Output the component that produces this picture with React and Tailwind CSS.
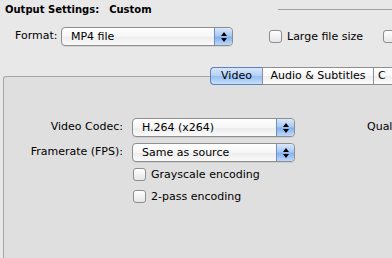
import React from "react";

// Aqua style pieces
const Stepper = () => (
  <div className="w-[18px] shrink-0 self-stretch rounded-r-[4px] border-l border-[#6c8fc4] bg-[linear-gradient(to_bottom,#d9e8fb_0%,#a9c9f3_45%,#86b2ee_55%,#bcd8fa_100%)] flex flex-col items-center justify-center gap-[2px]">
    <div className="w-0 h-0 border-l-[3px] border-r-[3px] border-b-[4px] border-l-transparent border-r-transparent border-b-black" />
    <div className="w-0 h-0 border-l-[3px] border-r-[3px] border-t-[4px] border-l-transparent border-r-transparent border-t-black" />
  </div>
);

const Popup = ({ value, width }) => (
  <div
    className={`${width} shrink-0 h-[19px] flex rounded-[4px] border border-[#8e8e8e] bg-[linear-gradient(to_bottom,#ffffff_0%,#f6f6f6_50%,#ececec_51%,#fafafa_100%)] shadow-[0_1px_0_rgba(0,0,0,0.08)] overflow-hidden`}>
    <div className="flex-1 pl-[9px] leading-[17px] whitespace-nowrap">{value}</div>
    <Stepper />
  </div>
);

const Checkbox = ({ label }) => (
  <label className="flex items-center gap-[5px] leading-[13px] whitespace-nowrap shrink-0">
    <span className="w-[13px] h-[13px] shrink-0 rounded-[3px] border border-[#8e8e8e] bg-[linear-gradient(to_bottom,#ffffff,#e6e6e6)]" />
    {label && <span>{label}</span>}
  </label>
);

const Tab = ({ label, selected, className = "" }) => (
  <div
    className={`h-[18px] shrink-0 flex items-center justify-center border-y whitespace-nowrap ${className} ${
      selected
        ? "bg-[linear-gradient(to_bottom,#d7e7fb_0%,#b2d0f6_50%,#93bef2_51%,#c6dffb_100%)] border-[#5f80b8]"
        : "bg-[linear-gradient(to_bottom,#ffffff_0%,#f7f7f7_50%,#eeeeee_51%,#fbfbfb_100%)] border-[#8e8e8e]"
    }`}>
    {label}
  </div>
);

export default function App() {
  return (
    <div className="w-[392px] h-[258px] overflow-hidden bg-[#e8e8e8] text-[11px] text-black font-['DejaVu_Sans',sans-serif] flex flex-col">
      {/* Header */}
      <div className="h-[19px] flex items-center pl-[5px] font-bold text-[10px] whitespace-nowrap">
        <span className="shrink-0">Output Settings:</span>
        <span className="ml-[10px] shrink-0">Custom</span>
        <div className="flex-1 ml-[126px] h-px bg-[#a0a0a0]" />
      </div>

      {/* Format row */}
      <div className="mt-[8px] h-[19px] flex items-center">
        <span className="ml-[15px] w-[46px] shrink-0">Format:</span>
        <Popup value="MP4 file" width="w-[172px]" />
        <div className="ml-[36px] shrink-0">
          <Checkbox label="Large file size" />
        </div>
        <div className="ml-[20px] shrink-0">
          <Checkbox />
        </div>
      </div>

      {/* Tabs */}
      <div className="mt-[21px] flex pl-[210px] -mb-[9px] relative z-10">
        <Tab label="Video" selected className="w-[52px] border-l rounded-l-[4px]" />
        <Tab label="Audio & Subtitles" className="w-[111px] border-l border-l-[#8e8e8e]" />
        <Tab label="C" className="w-[40px] border-l justify-start pl-[4px]" />
      </div>

      {/* Panel */}
      <div className="flex-1 ml-[3px] border-t border-l border-[#a6a6a6] rounded-tl-[3px] bg-[#dfdfdf] pt-[41px] whitespace-nowrap">
        <div className="flex items-center h-[19px]">
          <span className="w-[119px] shrink-0 text-right">Video Codec:</span>
          <div className="ml-[9px] shrink-0">
            <Popup value="H.264 (x264)" width="w-[163px]" />
          </div>
          <span className="ml-[72px] shrink-0">Quality:</span>
        </div>
        <div className="flex items-center h-[19px] mt-[6px]">
          <span className="w-[119px] shrink-0 text-right">Framerate (FPS):</span>
          <div className="ml-[9px] shrink-0">
            <Popup value="Same as source" width="w-[163px]" />
          </div>
        </div>
        <div className="ml-[129px] mt-[6px] flex flex-col gap-[9px]">
          <Checkbox label="Grayscale encoding" />
          <Checkbox label="2-pass encoding" />
        </div>
      </div>
    </div>
  );
}
